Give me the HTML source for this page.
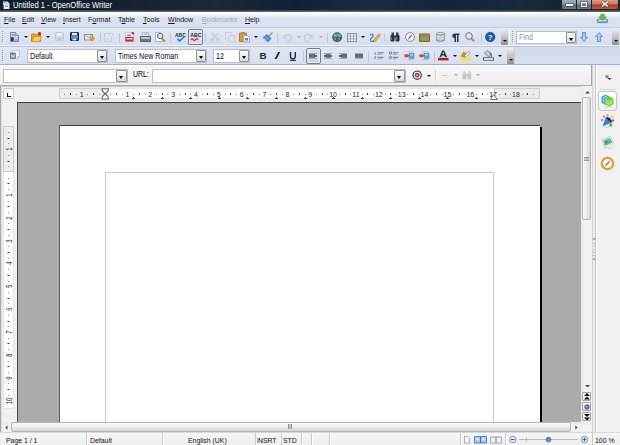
<!DOCTYPE html>
<html><head><meta charset="utf-8">
<style>
*{margin:0;padding:0;box-sizing:border-box}
html,body{width:620px;height:445px;overflow:hidden;background:#f0f0f0;font-family:"Liberation Sans",sans-serif;position:relative}
.a{position:absolute}
svg.a{overflow:visible}
.t{position:absolute;white-space:nowrap;font-size:7.2px;line-height:1;color:#000}
.grip{position:absolute;width:3px}
.sep{position:absolute;width:1px;background:#bfc7d7}
.combo{position:absolute;background:#fff;border:1px solid #b9bec8}
.dd{position:absolute;right:0;top:0;bottom:0;width:10px;background:linear-gradient(#fdfdfd,#e6e6e6 60%,#dadada);border:1px solid #8e9096;border-radius:1px}
.dd:after{content:"";position:absolute;left:1.5px;top:4.5px;border-left:2.5px solid transparent;border-right:2.5px solid transparent;border-top:3px solid #000}
.arr{position:absolute;width:0;height:0;border-left:2px solid transparent;border-right:2px solid transparent;border-top:2px solid #111}
.arrd{border-top-color:#a8b0bc}
.tend{position:absolute;width:7px;background:linear-gradient(#ececec,#c4c4c4 50%,#8e8e8e);border-radius:1px}
.tend:after{content:"";position:absolute;left:1.5px;bottom:3px;border-left:2px solid transparent;border-right:2px solid transparent;border-top:2px solid #111}
.rn{font-size:7px;color:#1a1a2a}
.vn{font-size:8.2px;color:#1a1a2a;display:flex;align-items:center;justify-content:center;transform:rotate(-90deg) scaleX(0.72)}
.ssep{position:absolute;top:1px;width:1px;height:12px;background:#c9c9c9;box-shadow:1px 0 0 #fff}
.st{position:absolute;white-space:nowrap;font-size:6.9px;line-height:1;color:#111;top:5px}
</style></head><body>
<div class="a" style="left:0px;top:0px;width:620px;height:11px;background:linear-gradient(90deg,#141e2a 0%,#162230 20%,#1a2838 35%,#122036 48%,#1c2c3e 60%,#14243a 72%,#1a2a3c 84%,#101c2a 100%)"></div>
<div class="a" style="left:0px;top:9.5px;width:620px;height:2px;background:linear-gradient(#2a3644,#6a747e)"></div>
<svg class="a" style="left:2px;top:1px" width="8" height="8" viewBox="0 0 8 8"><path d="M1 0.5 h4.5 l2 2 v5.5 h-6.5z" fill="#dfe6ee"/><rect x="1.5" y="1.2" width="3.5" height="1" fill="#9aa8b8"/><rect x="1.5" y="2.8" width="5" height="0.8" fill="#b8c4d0"/><rect x="2" y="4.2" width="5" height="3.3" fill="#f4f8fc"/><rect x="3" y="4.8" width="3" height="1" fill="#4a7ab0"/><rect x="0.5" y="4" width="1.2" height="3.8" fill="#1a2a3a"/></svg>
<div class="t" style="left:12.6px;top:1.7px;font-size:8.2px;color:#fff;transform:scaleX(0.925);transform-origin:0 0">Untitled 1 - OpenOffice Writer</div>
<div class="a" style="left:561px;top:0px;width:58px;height:9.5px;background:#1c242e;border-radius:0 0 3px 3px;box-shadow:0 0 1px #6a7480"></div>
<div class="a" style="left:562px;top:0px;width:14px;height:8.5px;background:linear-gradient(#a2acb8 0,#8a96a2 45%,#5e6a78 55%,#6e7a88 100%);border-radius:0 0 0 2px"></div>
<div class="a" style="left:577px;top:0px;width:14px;height:8.5px;background:linear-gradient(#a2acb8 0,#8a96a2 45%,#5e6a78 55%,#6e7a88 100%)"></div>
<div class="a" style="left:592px;top:0px;width:26px;height:8.5px;background:linear-gradient(#dc9a8e 0,#cc7464 45%,#a83a24 55%,#c05a3a 100%);border-radius:0 0 2px 0"></div>
<div class="a" style="left:566px;top:3.5px;width:7px;height:2px;background:#fff;box-shadow:0 0 0 0.6px #40464e"></div>
<div class="a" style="left:581px;top:2px;width:6px;height:5px;border:1px solid #fff;border-top-width:1.6px;box-shadow:0 0 0 0.6px #40464e"></div>
<svg class="a" style="left:601px;top:1px" width="8" height="6" viewBox="0 0 8 6"><path d="M1.2 0.6 L6.8 5.4 M6.8 0.6 L1.2 5.4" stroke="#5a1a10" stroke-width="2.6"/><path d="M1.2 0.6 L6.8 5.4 M6.8 0.6 L1.2 5.4" stroke="#fff" stroke-width="1.6"/></svg>
<div class="a" style="left:0px;top:11.5px;width:620px;height:15.5px;background:linear-gradient(#ffffff 0,#fafbfd 1.5px,#e8ecf6 4px,#dbe1f1 6px,#d9dff0 100%)"></div>
<div class="a" style="left:0px;top:27px;width:620px;height:1px;background:#c6cddd"></div>
<div class="t" style="left:4px;top:16.1px;font-size:7.6px;color:#151515;transform:scaleX(0.93);transform-origin:0 0"><u style="text-decoration-thickness:1px;text-underline-offset:1px">F</u>ile</div>
<div class="t" style="left:22px;top:16.1px;font-size:7.6px;color:#151515;transform:scaleX(0.93);transform-origin:0 0"><u style="text-decoration-thickness:1px;text-underline-offset:1px">E</u>dit</div>
<div class="t" style="left:41px;top:16.1px;font-size:7.6px;color:#151515;transform:scaleX(0.93);transform-origin:0 0"><u style="text-decoration-thickness:1px;text-underline-offset:1px">V</u>iew</div>
<div class="t" style="left:63px;top:16.1px;font-size:7.6px;color:#151515;transform:scaleX(0.93);transform-origin:0 0"><u style="text-decoration-thickness:1px;text-underline-offset:1px">I</u>nsert</div>
<div class="t" style="left:88px;top:16.1px;font-size:7.6px;color:#151515;transform:scaleX(0.93);transform-origin:0 0">F<u style="text-decoration-thickness:1px;text-underline-offset:1px">o</u>rmat</div>
<div class="t" style="left:118px;top:16.1px;font-size:7.6px;color:#151515;transform:scaleX(0.93);transform-origin:0 0">T<u style="text-decoration-thickness:1px;text-underline-offset:1px">a</u>ble</div>
<div class="t" style="left:143px;top:16.1px;font-size:7.6px;color:#151515;transform:scaleX(0.93);transform-origin:0 0"><u style="text-decoration-thickness:1px;text-underline-offset:1px">T</u>ools</div>
<div class="t" style="left:168px;top:16.1px;font-size:7.6px;color:#151515;transform:scaleX(0.93);transform-origin:0 0"><u style="text-decoration-thickness:1px;text-underline-offset:1px">W</u>indow</div>
<div class="t" style="left:202px;top:16.1px;font-size:7.6px;color:#a4a9b2;transform:scaleX(0.93);transform-origin:0 0"><u style="text-decoration-thickness:1px;text-underline-offset:1px">B</u>ookmarks</div>
<div class="t" style="left:245px;top:16.1px;font-size:7.6px;color:#151515;transform:scaleX(0.93);transform-origin:0 0"><u style="text-decoration-thickness:1px;text-underline-offset:1px">H</u>elp</div>
<svg class="a" style="left:597px;top:14px" width="11" height="9" viewBox="0 0 11 9"><rect x="0.4" y="5.2" width="10.2" height="3.4" rx="0.8" fill="#8ab4e0" stroke="#3a6aa0" stroke-width="0.7"/><rect x="1.5" y="5.8" width="8" height="1" fill="#dceaf8"/><path d="M3.8 0.3 h3.4 v2.6 h2 l-3.7 3.6 l-3.7 -3.6 h2z" fill="#6cc43a" stroke="#3a8a1a" stroke-width="0.6"/></svg>
<div class="a" style="left:0px;top:28px;width:620px;height:37px;background:#d5dcee"></div>
<div class="a" style="left:0px;top:28px;width:509px;height:18px;background:linear-gradient(#e2e7f4,#d6ddee);border-bottom:1px solid #eef1f8"></div>
<div class="a" style="left:510px;top:28px;width:110px;height:18px;background:linear-gradient(#e2e7f4,#d6ddee);border-bottom:1px solid #eef1f8"></div>
<div class="a" style="left:509px;top:28px;width:1px;height:18px;background:#f3f6fb"></div>
<div class="a" style="left:0px;top:47px;width:514px;height:18px;background:linear-gradient(#e0e6f3,#d6ddee)"></div>
<div class="a" style="left:0px;top:46px;width:620px;height:1px;background:#bfc6d6"></div>
<div class="a" style="left:514px;top:47px;width:1px;height:18px;background:#c5cde0"></div>
<div class="a" style="left:515px;top:47px;width:105px;height:18px;background:linear-gradient(#d2d9eb,#d8dff0)"></div>
<div class="a" style="left:0px;top:64px;width:620px;height:1px;background:#a9afba"></div>
<svg class="a" style="left:2px;top:31px" width="3" height="12" viewBox="0 0 3 12"><rect x="0" y="0" width="1" height="1" fill="#8e98aa"/><rect x="1" y="1" width="1" height="1" fill="#ffffff"/><rect x="0" y="2" width="1" height="1" fill="#8e98aa"/><rect x="1" y="3" width="1" height="1" fill="#ffffff"/><rect x="0" y="4" width="1" height="1" fill="#8e98aa"/><rect x="1" y="5" width="1" height="1" fill="#ffffff"/><rect x="0" y="6" width="1" height="1" fill="#8e98aa"/><rect x="1" y="7" width="1" height="1" fill="#ffffff"/><rect x="0" y="8" width="1" height="1" fill="#8e98aa"/><rect x="1" y="9" width="1" height="1" fill="#ffffff"/><rect x="0" y="10" width="1" height="1" fill="#8e98aa"/><rect x="1" y="11" width="1" height="1" fill="#ffffff"/></svg>
<svg class="a" style="left:2px;top:50px" width="3" height="12" viewBox="0 0 3 12"><rect x="0" y="0" width="1" height="1" fill="#8e98aa"/><rect x="1" y="1" width="1" height="1" fill="#ffffff"/><rect x="0" y="2" width="1" height="1" fill="#8e98aa"/><rect x="1" y="3" width="1" height="1" fill="#ffffff"/><rect x="0" y="4" width="1" height="1" fill="#8e98aa"/><rect x="1" y="5" width="1" height="1" fill="#ffffff"/><rect x="0" y="6" width="1" height="1" fill="#8e98aa"/><rect x="1" y="7" width="1" height="1" fill="#ffffff"/><rect x="0" y="8" width="1" height="1" fill="#8e98aa"/><rect x="1" y="9" width="1" height="1" fill="#ffffff"/><rect x="0" y="10" width="1" height="1" fill="#8e98aa"/><rect x="1" y="11" width="1" height="1" fill="#ffffff"/></svg>
<svg class="a" style="left:512px;top:31px" width="3" height="12" viewBox="0 0 3 12"><rect x="0" y="0" width="1" height="1" fill="#8e98aa"/><rect x="1" y="1" width="1" height="1" fill="#ffffff"/><rect x="0" y="2" width="1" height="1" fill="#8e98aa"/><rect x="1" y="3" width="1" height="1" fill="#ffffff"/><rect x="0" y="4" width="1" height="1" fill="#8e98aa"/><rect x="1" y="5" width="1" height="1" fill="#ffffff"/><rect x="0" y="6" width="1" height="1" fill="#8e98aa"/><rect x="1" y="7" width="1" height="1" fill="#ffffff"/><rect x="0" y="8" width="1" height="1" fill="#8e98aa"/><rect x="1" y="9" width="1" height="1" fill="#ffffff"/><rect x="0" y="10" width="1" height="1" fill="#8e98aa"/><rect x="1" y="11" width="1" height="1" fill="#ffffff"/></svg>
<div class="tend" style="left:501px;top:29px;height:16px"></div>
<div class="tend" style="left:612px;top:29px;height:16px"></div>
<div class="tend" style="left:507px;top:48px;height:16px"></div>
<svg class="a" style="left:10px;top:32px" width="9" height="10" viewBox="0 0 9 10"><path d="M0.5 0.5 h5 l3 3 v6 h-8z" fill="#eef2f8" stroke="#6a7a8e" stroke-width="0.9"/><path d="M5.5 0.5 v3 h3" fill="#c8d4e0" stroke="#6a7a8e" stroke-width="0.7"/><rect x="1.5" y="1.8" width="3" height="0.9" fill="#5a6a80"/><rect x="1.5" y="3.4" width="4.5" height="0.9" fill="#7a8a9e"/><rect x="1" y="5.2" width="2.8" height="3.8" fill="#2a3e5a"/><rect x="4.3" y="5.2" width="3.7" height="3.8" fill="#8ab4e0"/><rect x="5" y="6" width="2.3" height="1" fill="#e8f0f8"/></svg>
<div class="arr" style="left:24px;top:36px"></div>
<svg class="a" style="left:31px;top:32px" width="11" height="10" viewBox="0 0 11 10"><path d="M0.5 2 h4 l1 1 h4 v6.5 h-9z" fill="#e9a818" stroke="#b87a10" stroke-width="0.8"/><path d="M1 9.5 l2 -5 h7.5 l-2 5z" fill="#f8d050" stroke="#c89020" stroke-width="0.6"/><circle cx="8.5" cy="1.8" r="1.8" fill="#d82020"/></svg>
<div class="arr" style="left:46px;top:36px"></div>
<svg class="a" style="left:55px;top:32px" width="9" height="9" viewBox="0 0 9 9"><rect x="0.5" y="0.5" width="8" height="8" rx="1" fill="#d4d9e2" stroke="#c2c8d2"/><rect x="2" y="1" width="5" height="3" fill="#eef1f6"/><rect x="2.5" y="6" width="4" height="2.5" fill="#c4cad4"/></svg>
<svg class="a" style="left:70px;top:32px" width="9" height="9" viewBox="0 0 9 9"><rect x="0.5" y="0.5" width="8" height="8" rx="0.5" fill="#1f4f9a" stroke="#0e2446"/><rect x="2" y="0.8" width="5" height="2.5" fill="#e8eef8"/><rect x="1" y="4" width="7" height="2" fill="#4a9ae8"/><rect x="2.5" y="6.5" width="4" height="2" fill="#dfe6f0"/></svg>
<svg class="a" style="left:84px;top:34px" width="11" height="7" viewBox="0 0 11 7"><rect x="0.5" y="0.5" width="8" height="5.5" fill="#e8eaee" stroke="#8a929e"/><path d="M0.5 0.5 l4 3 l4 -3" stroke="#8a929e" fill="none" stroke-width="0.8"/><path d="M6 3.5 h2 v-1.5 l3 2.5 l-3 2.5 v-1.5 h-2z" fill="#f0a020" stroke="#c07010" stroke-width="0.5"/></svg>
<div class="sep" style="left:100px;top:33px;height:9px"></div>
<svg class="a" style="left:104px;top:32px" width="10" height="10" viewBox="0 0 10 10"><rect x="0.5" y="1.5" width="7" height="8" fill="#dfe3ea" stroke="#c8ced8"/><path d="M3 6 l5 -5 l1.5 1.5 l-5 5 h-1.5z" fill="#e6eaf0" stroke="#c4cad4" stroke-width="0.8"/></svg>
<div class="sep" style="left:119px;top:33px;height:9px"></div>
<svg class="a" style="left:125px;top:32px" width="9" height="10" viewBox="0 0 9 10"><path d="M0.5 0.5 h6 l2 2 v7 h-8z" fill="#f4f6fa" stroke="#b0b8c4" stroke-width="0.8"/><rect x="2" y="2.5" width="4" height="2" fill="#6a9ad8"/><rect x="0.5" y="5" width="8" height="4.5" fill="#d42a1e"/><rect x="1.5" y="6" width="6" height="1.5" fill="#fbd0c8"/><circle cx="7.8" cy="1.3" r="1.3" fill="#d42020"/></svg>
<svg class="a" style="left:140px;top:32px" width="11" height="10" viewBox="0 0 11 10"><rect x="2.5" y="0.5" width="6" height="4" fill="#f8fafc" stroke="#9aa6b4" stroke-width="0.7"/><rect x="3.5" y="1.5" width="4" height="1.3" fill="#7ab0e0"/><path d="M0.5 4.5 h10 v5 h-10z" fill="#70767e" stroke="#3a3e44" stroke-width="0.7"/><rect x="1" y="5" width="9" height="1.8" fill="#c8ccd2"/><rect x="7.8" y="7.3" width="2" height="1.3" fill="#48c048"/></svg>
<svg class="a" style="left:155px;top:32px" width="11" height="10" viewBox="0 0 11 10"><path d="M0.5 0.5 h5 l2 2 v7 h-7z" fill="#f8f9fb" stroke="#9aa4b0" stroke-width="0.8"/><line x1="6.5" y1="6" x2="10" y2="9.5" stroke="#d88a20" stroke-width="1.8"/><circle cx="5.2" cy="4" r="2.7" fill="#cfe4f6" stroke="#5a6878" stroke-width="1"/></svg>
<div class="sep" style="left:170px;top:33px;height:9px"></div>
<svg class="a" style="left:175px;top:32px" width="11" height="10" viewBox="0 0 11 10"><text x="0" y="4.6" font-family="Liberation Sans" font-weight="bold" font-size="5" fill="#1a2a48">ABC</text><path d="M2.5 6.5 l2 2.5 l5 -4.5" stroke="#2a78d8" stroke-width="1.6" fill="none"/></svg>
<div class="a" style="left:188px;top:29px;width:15px;height:16px;border:1px solid #747d8b;border-radius:2px;background:linear-gradient(#dde2ec,#cfd6e3);box-shadow:inset 0 0 0 1px #e8ecf3"></div>
<svg class="a" style="left:190px;top:32px" width="11" height="9" viewBox="0 0 11 9"><text x="0.3" y="5" font-family="Liberation Sans" font-weight="bold" font-size="5.2" fill="#1a2a48">ABC</text><path d="M0.8 7.6 q1.2 -1.6 2.4 0 t2.4 0 t2.4 0" stroke="#e02a18" stroke-width="1.3" fill="none"/></svg>
<div class="sep" style="left:205px;top:33px;height:9px"></div>
<svg class="a" style="left:210px;top:32px" width="11" height="10" viewBox="0 0 11 10"><path d="M1.5 0.5 L8.5 8 M8.5 0.5 L1.5 8" stroke="#c6ccd6" stroke-width="1.3"/><circle cx="2" cy="8.3" r="1.4" fill="none" stroke="#c6ccd6"/><circle cx="8" cy="8.3" r="1.4" fill="none" stroke="#c6ccd6"/></svg>
<svg class="a" style="left:225px;top:32px" width="10" height="10" viewBox="0 0 10 10"><rect x="0.5" y="0.5" width="5.5" height="6.5" fill="#e2e6ec" stroke="#c8ced8"/><rect x="4" y="3.5" width="5.5" height="6" fill="#e2e6ec" stroke="#c8ced8"/></svg>
<svg class="a" style="left:239px;top:32px" width="11" height="10" viewBox="0 0 11 10"><rect x="0.5" y="1" width="7" height="8.5" rx="0.5" fill="#e49a20" stroke="#a86a10" stroke-width="0.8"/><rect x="2.5" y="0" width="3" height="2" fill="#8a8e96"/><path d="M4.5 3.5 h4 l2 2 v4.5 h-6z" fill="#f2f6fa" stroke="#8a96a6" stroke-width="0.8"/><rect x="6" y="6" width="3" height="2.5" fill="#4a8ad8"/></svg>
<div class="arr" style="left:254px;top:36px"></div>
<svg class="a" style="left:262px;top:32px" width="12" height="10" viewBox="0 0 12 10"><line x1="7" y1="4" x2="10.5" y2="0.5" stroke="#d89020" stroke-width="1.6"/><path d="M1 5.5 l4 -3 l4 4 l-3 3.5 z" fill="#3a8ae0" stroke="#2a68b8" stroke-width="0.6"/><path d="M2 5.5 l3 3 M3.5 4.2 l3 3" stroke="#a8d0f8" stroke-width="0.7"/></svg>
<div class="sep" style="left:277px;top:33px;height:9px"></div>
<svg class="a" style="left:282px;top:33px" width="10" height="9" viewBox="0 0 10 9"><path d="M2 1.5 v3.5 h3.5" stroke="#c6ccd6" stroke-width="1.2" fill="none"/><path d="M2.5 4.5 a3.6 3.6 0 1 1 2.5 4" stroke="#c6ccd6" stroke-width="1.4" fill="none"/></svg>
<div class="arr arrd" style="left:297px;top:36px"></div>
<svg class="a" style="left:304px;top:33px" width="10" height="9" viewBox="0 0 10 9"><path d="M8 1.5 v3.5 h-3.5" stroke="#c6ccd6" stroke-width="1.2" fill="none"/><path d="M7.5 4.5 a3.6 3.6 0 1 0 -2.5 4" stroke="#c6ccd6" stroke-width="1.4" fill="none"/></svg>
<div class="arr arrd" style="left:319px;top:36px"></div>
<div class="sep" style="left:327px;top:33px;height:9px"></div>
<svg class="a" style="left:332px;top:32px" width="11" height="11" viewBox="0 0 11 11"><circle cx="5.2" cy="5.2" r="4.8" fill="#3a78c0"/><rect x="1.6" y="1.8" width="3.2" height="3" fill="#78c838"/><rect x="5.6" y="1.8" width="3.2" height="3" fill="#78c838"/><rect x="1.6" y="5.4" width="3.2" height="3.4" fill="#3a3e44"/><rect x="5.6" y="5.4" width="3.2" height="3.4" fill="#3a3e44"/><path d="M2.2 6.3 h2 M2.2 7.8 h2 M6.2 6.3 h2 M6.2 7.8 h2" stroke="#e8ecf0" stroke-width="0.6"/><circle cx="5.2" cy="5.2" r="4.6" fill="none" stroke="#2a5a98" stroke-width="0.7"/></svg>
<svg class="a" style="left:347px;top:33px" width="10" height="9" viewBox="0 0 10 9"><rect x="0.5" y="0.5" width="9" height="8" fill="#f0f2f5" stroke="#8e949c"/><path d="M3.5 0.5 v8 M6.5 0.5 v8 M0.5 3.2 h9 M0.5 5.9 h9" stroke="#9aa0a8" stroke-width="0.9"/></svg>
<div class="arr" style="left:361px;top:36px"></div>
<svg class="a" style="left:369px;top:32px" width="11" height="10" viewBox="0 0 11 10"><path d="M1 3.5 q1.5 -2.5 3 -0.8 q1 1.3 -1.5 3.3 q-2 1.8 -0.5 3.2 q1 0.8 2.5 -0.5" stroke="#2a80e0" stroke-width="1.1" fill="none"/><path d="M4.2 8.6 l5 -6 l1.6 1.4 l-5 6z" fill="#f4c020" stroke="#9a7010" stroke-width="0.6"/><path d="M9.2 2.6 l1 -1.2 l1.6 1.4 l-1 1.2z" fill="#f07890"/><path d="M4.2 8.6 l-0.4 1.2 l1.2 -0.5z" fill="#333"/></svg>
<div class="sep" style="left:384px;top:33px;height:9px"></div>
<svg class="a" style="left:390px;top:32px" width="10" height="10" viewBox="0 0 10 10"><rect x="0.5" y="3" width="4" height="6.5" rx="1" fill="#2a2c30"/><rect x="5.5" y="3" width="4" height="6.5" rx="1" fill="#2a2c30"/><rect x="1.5" y="0.5" width="2.5" height="3" fill="#3a3c42"/><rect x="6" y="0.5" width="2.5" height="3" fill="#3a3c42"/><rect x="4" y="3.5" width="2" height="2.5" fill="#4a4c52"/><rect x="1.2" y="5" width="1" height="3" fill="#7a7e86"/><rect x="6.2" y="5" width="1" height="3" fill="#7a7e86"/></svg>
<svg class="a" style="left:405px;top:32px" width="10" height="10" viewBox="0 0 10 10"><circle cx="5" cy="5" r="4.4" fill="#fafafa" stroke="#7a8088" stroke-width="0.9"/><path d="M7.5 2 L5.6 5.6 L4.4 4.4z" fill="#2a6ad8"/><path d="M2.5 8 L4.4 4.4 L5.6 5.6z" fill="#e02020"/></svg>
<svg class="a" style="left:419px;top:33px" width="11" height="9" viewBox="0 0 11 9"><rect x="0.5" y="1" width="10" height="7.5" fill="#c87a28" stroke="#8a5010" stroke-width="0.8"/><rect x="2" y="2.5" width="7" height="2" fill="#3a9ae0"/><rect x="2" y="4.5" width="7" height="2.5" fill="#5ac040"/><path d="M4 1 l1.5 -1 l1.5 1" stroke="#9aa0a8" stroke-width="0.6" fill="none"/></svg>
<svg class="a" style="left:436px;top:32px" width="9" height="10" viewBox="0 0 9 10"><path d="M0.5 1.5 v7 q4 2 8 0 v-7" fill="#b8bcc4" stroke="#7a7e86" stroke-width="0.8"/><ellipse cx="4.5" cy="1.6" rx="4" ry="1.2" fill="#e4e6ea" stroke="#7a7e86" stroke-width="0.7"/><path d="M0.5 4 q4 2 8 0 M0.5 6.2 q4 2 8 0" stroke="#f0f2f4" stroke-width="0.8" fill="none"/></svg>
<svg class="a" style="left:451px;top:33px" width="9" height="9" viewBox="0 0 9 9"><path d="M3.5 0.5 h5 v1.5 h-1 v7 h-1.5 v-7 h-1 v7 h-1.5 v-4 a2.2 2.2 0 0 1 0 -4.5z" fill="#1c3a64"/></svg>
<svg class="a" style="left:465px;top:32px" width="10" height="10" viewBox="0 0 10 10"><line x1="6" y1="6" x2="9.2" y2="9.2" stroke="#d88a20" stroke-width="2"/><circle cx="4" cy="4" r="3.3" fill="#d8ecfa" stroke="#6a7480" stroke-width="1"/></svg>
<div class="sep" style="left:481px;top:33px;height:9px"></div>
<svg class="a" style="left:485px;top:32px" width="11" height="11" viewBox="0 0 11 11"><circle cx="5.2" cy="5" r="4.8" fill="#1a5ab0" stroke="#0e3e80" stroke-width="0.5"/><text x="5.2" y="7.9" text-anchor="middle" font-family="Liberation Sans" font-weight="bold" font-size="7.5" fill="#fff">?</text></svg>
<div class="combo" style="left:516px;top:31px;width:61px;height:13px"><div class="dd"></div></div>
<div class="t" style="left:519px;top:34.4px;font-size:8.2px;color:#8a929e;transform:scaleX(0.87);transform-origin:0 0">Find</div>
<svg class="a" style="left:580px;top:32px" width="8" height="10" viewBox="0 0 8 10"><path d="M2.5 0.5 h3 v5 h2 l-3.5 4 l-3.5 -4 h2z" fill="#a8cdf0" stroke="#4a88c8" stroke-width="0.8"/></svg>
<svg class="a" style="left:595px;top:32px" width="8" height="10" viewBox="0 0 8 10"><path d="M2.5 9.5 h3 v-5 h2 l-3.5 -4 l-3.5 4 h2z" fill="#a8cdf0" stroke="#4a88c8" stroke-width="0.8"/></svg>
<svg class="a" style="left:10px;top:50px" width="10" height="10" viewBox="0 0 10 10"><path d="M2.5 0.5 h7 v6 l-2 2 h-5z" fill="#eef0f4" stroke="#b4bac4" stroke-width="0.7"/><rect x="0.5" y="3" width="5" height="5.5" fill="#7a8088" stroke="#5a6068" stroke-width="0.6"/><path d="M1.2 4 l0.8 3.5 l0.9 -2.3 l0.9 2.3 l0.8 -3.5" stroke="#f4f4f4" stroke-width="0.7" fill="none"/><path d="M7.5 8.5 v-2 h2" fill="#d0d4da" stroke="#b4bac4" stroke-width="0.6"/></svg>
<div class="combo" style="left:27px;top:49px;width:81px;height:14px"><div class="dd"></div></div>
<div class="t" style="left:30px;top:53.4px;font-size:8.2px;color:#0a0a14;transform:scaleX(0.87);transform-origin:0 0">Default</div>
<div class="combo" style="left:115px;top:49px;width:92px;height:14px"><div class="dd"></div></div>
<div class="t" style="left:118px;top:53.4px;font-size:8.2px;color:#0a0a14;transform:scaleX(0.87);transform-origin:0 0">Times New Roman</div>
<div class="combo" style="left:213px;top:49px;width:37px;height:14px"><div class="dd"></div></div>
<div class="t" style="left:216px;top:53.4px;font-size:8.2px;color:#0a0a14;transform:scaleX(0.87);transform-origin:0 0">12</div>
<svg class="a" style="left:259px;top:51px" width="40" height="11" viewBox="0 0 40 11"><text x="0.6" y="8" font-family="Liberation Sans" font-weight="bold" font-size="9.8" fill="#1a2a40">B</text><path d="M19.2 1 h2 l-3.6 7 h-2z" fill="#1a2a40"/><path d="M31.5 1 v4.6 q0 2.4 2.4 2.4 q2.4 0 2.4 -2.4 v-4.6" stroke="#1a2a40" stroke-width="1.4" fill="none"/><rect x="30.8" y="9" width="6.2" height="0.9" fill="#1a2a40"/></svg>
<div class="sep" style="left:303px;top:51px;height:11px"></div>
<div class="a" style="left:306px;top:48px;width:15px;height:16px;border:1px solid #747d8b;border-radius:2px;background:linear-gradient(#dde2ec,#cfd6e3);box-shadow:inset 0 0 0 1px #e8ecf3"></div>
<svg class="a" style="left:309px;top:53px" width="8" height="6" viewBox="0 0 8 6"><rect x="0" y="0" width="8" height="1" fill="#9aa2ac"/><rect x="0" y="1" width="6" height="1" fill="#6a7480"/><rect x="0" y="2" width="8" height="1" fill="#5a6472"/><rect x="0" y="3" width="8" height="1" fill="#606a78"/><rect x="0" y="4" width="6" height="1" fill="#76808c"/><rect x="0" y="5" width="8" height="1" fill="#a4acb6"/></svg>
<svg class="a" style="left:324px;top:53px" width="8" height="6" viewBox="0 0 8 6"><rect x="0" y="0" width="8" height="1" fill="#9aa2ac"/><rect x="1.5" y="1" width="5" height="1" fill="#6a7480"/><rect x="0" y="2" width="8" height="1" fill="#5a6472"/><rect x="0" y="3" width="8" height="1" fill="#606a78"/><rect x="1.5" y="4" width="5" height="1" fill="#76808c"/><rect x="0" y="5" width="8" height="1" fill="#a4acb6"/></svg>
<svg class="a" style="left:339px;top:53px" width="8" height="6" viewBox="0 0 8 6"><rect x="0" y="0" width="8" height="1" fill="#9aa2ac"/><rect x="2" y="1" width="6" height="1" fill="#6a7480"/><rect x="0" y="2" width="8" height="1" fill="#5a6472"/><rect x="0" y="3" width="8" height="1" fill="#606a78"/><rect x="2" y="4" width="6" height="1" fill="#76808c"/><rect x="0" y="5" width="8" height="1" fill="#a4acb6"/></svg>
<svg class="a" style="left:355px;top:53px" width="8" height="6" viewBox="0 0 8 6"><rect x="0" y="0" width="8" height="1" fill="#9aa2ac"/><rect x="0" y="1" width="8" height="1" fill="#6a7480"/><rect x="0" y="2" width="8" height="1" fill="#5a6472"/><rect x="0" y="3" width="8" height="1" fill="#606a78"/><rect x="0" y="4" width="8" height="1" fill="#76808c"/><rect x="0" y="5" width="8" height="1" fill="#a4acb6"/></svg>
<div class="sep" style="left:368px;top:51px;height:11px"></div>
<svg class="a" style="left:374px;top:51px" width="10" height="9" viewBox="0 0 10 9"><text x="0" y="3.6" font-family="Liberation Sans" font-weight="bold" font-size="3.8" fill="#3a78d0">1</text><text x="0" y="8.2" font-family="Liberation Sans" font-weight="bold" font-size="3.8" fill="#3a78d0">2</text><rect x="3.5" y="1.2" width="6" height="1.2" fill="#7a828e"/><rect x="3.5" y="3" width="4.5" height="0.9" fill="#a4aab4"/><rect x="3.5" y="5.8" width="6" height="1.2" fill="#7a828e"/><rect x="3.5" y="7.6" width="4.5" height="0.9" fill="#a4aab4"/></svg>
<svg class="a" style="left:389px;top:51px" width="10" height="9" viewBox="0 0 10 9"><circle cx="1.5" cy="2" r="1.2" fill="#e8f0f8" stroke="#3a5a88" stroke-width="0.8"/><circle cx="1.5" cy="6.6" r="1.2" fill="#e8f0f8" stroke="#3a5a88" stroke-width="0.8"/><rect x="3.8" y="1.2" width="5.5" height="1.2" fill="#7a828e"/><rect x="3.8" y="3" width="4" height="0.9" fill="#a4aab4"/><rect x="3.8" y="5.8" width="5.5" height="1.2" fill="#7a828e"/><rect x="3.8" y="7.6" width="4" height="0.9" fill="#a4aab4"/></svg>
<svg class="a" style="left:404px;top:51px" width="11" height="10" viewBox="0 0 11 10"><path d="M3.5 0.8 h6 M3.5 8.8 h6" stroke="#a8aeb8" stroke-width="0.8"/><rect x="5" y="2.3" width="5" height="5" fill="#5aa8ec" stroke="#3a7ac0" stroke-width="0.5"/><rect x="6" y="3.3" width="3" height="1" fill="#d8ecfc"/><path d="M3 3 l2.5 1.8 l-2.5 1.8z" fill="#d83020"/><circle cx="2" cy="4.8" r="1.8" fill="#e84a28"/></svg>
<svg class="a" style="left:419px;top:51px" width="11" height="10" viewBox="0 0 11 10"><path d="M3.5 0.8 h6 M3.5 8.8 h6" stroke="#a8aeb8" stroke-width="0.8"/><rect x="5" y="2.3" width="5" height="5" fill="#5aa8ec" stroke="#3a7ac0" stroke-width="0.5"/><rect x="6" y="3.3" width="3" height="1" fill="#d8ecfc"/><path d="M3 3 l2.5 1.8 l-2.5 1.8z" fill="#d83020"/><circle cx="2" cy="4.8" r="1.8" fill="#e84a28"/></svg>
<div class="sep" style="left:434px;top:51px;height:11px"></div>
<svg class="a" style="left:438px;top:50px" width="11" height="11" viewBox="0 0 11 11"><path d="M1.5 7 L4.2 0.5 h2 L9 7 h-2 l-0.6 -1.6 h-2.6 l-0.6 1.6z M4.3 4 h1.8 l-0.9 -2.4z" fill="#1c3050"/><rect x="0" y="7.8" width="10.5" height="2.6" fill="#b81c14"/></svg>
<div class="arr" style="left:453px;top:55px"></div>
<svg class="a" style="left:460px;top:50px" width="11" height="11" viewBox="0 0 11 11"><path d="M0.5 6.5 l3 -5 l3 1.5 l-1 5z" fill="#c8902a"/><path d="M4.5 6 l4.5 -5 l1.5 1.3 l-4.5 5z" fill="#f0f2f6" stroke="#7a8290" stroke-width="0.6"/><rect x="0.3" y="7.8" width="10.4" height="2.6" fill="#f6ec10"/></svg>
<div class="arr" style="left:475px;top:55px"></div>
<svg class="a" style="left:483px;top:50px" width="11" height="11" viewBox="0 0 11 11"><path d="M1.5 3 l3 -2.5 l4 3 l-3 3.5z" fill="#c8ccd4" stroke="#5a6270" stroke-width="0.7"/><path d="M6.5 3 q3 2 1.5 4" stroke="#3a7ad0" stroke-width="1.4" fill="none"/><rect x="0.5" y="7.8" width="10" height="2.4" fill="#fff" stroke="#3a3e46" stroke-width="0.8"/></svg>
<div class="arr" style="left:498px;top:55px"></div>
<div class="a" style="left:0px;top:65px;width:592px;height:21px;background:linear-gradient(#f6f6f6,#eeeeee);border-top:1px solid #fdfdfd;border-bottom:1px solid #acacac"></div>
<div class="a" style="left:591px;top:65px;width:1px;height:22px;background:#a8a8a8"></div>
<div class="combo" style="left:3px;top:69px;width:125px;height:14px;border-color:#b8bcc4"><div class="dd" style="width:11px"></div></div>
<div class="t" style="left:133px;top:71.2px;font-size:8.2px;color:#0a0a18;transform:scaleX(0.85);transform-origin:0 0">URL:</div>
<div class="combo" style="left:152px;top:69px;width:254px;height:14px;border-color:#b8bcc4"><div class="dd" style="width:11px"></div></div>
<svg class="a" style="left:412px;top:70px" width="11" height="11" viewBox="0 0 11 11"><circle cx="5.2" cy="5.2" r="4.8" fill="#2a5ab0"/><circle cx="5.2" cy="5.2" r="3.4" fill="#f4f4f4"/><circle cx="5.2" cy="5.2" r="2.4" fill="#e02818"/><circle cx="5.2" cy="5.2" r="1" fill="#f8d020"/></svg>
<div class="arr" style="left:427px;top:75px"></div>
<div class="a" style="left:435px;top:69px;width:1px;height:12px;background:#d0d0d0;box-shadow:1px 0 0 #fff"></div>
<div class="a" style="left:442px;top:75px;width:5px;height:1px;background:#c8c8c8"></div>
<div class="arr arrd" style="left:454px;top:74px"></div>
<svg class="a" style="left:462px;top:71px" width="10" height="9" viewBox="0 0 10 9"><rect x="0.5" y="2.5" width="3.8" height="6" rx="1" fill="#c4c8ce"/><rect x="5.5" y="2.5" width="3.8" height="6" rx="1" fill="#c4c8ce"/><rect x="1.2" y="0.3" width="2.4" height="3" fill="#ccd0d6"/><rect x="6.2" y="0.3" width="2.4" height="3" fill="#ccd0d6"/><rect x="4" y="3" width="2" height="2" fill="#ccd0d6"/></svg>
<div class="arr arrd" style="left:476px;top:74px"></div>
<div class="a" style="left:592px;top:65px;width:4px;height:368px;background:#ececec;border-left:1px solid #d4d4d4"></div>
<div class="a" style="left:595px;top:65px;width:1px;height:368px;background:#c8c8c8"></div>
<div class="a" style="left:596px;top:65px;width:24px;height:368px;background:#f0f0f0;border-left:1px solid #fafafa"></div>
<svg class="a" style="left:605px;top:75px" width="7" height="6" viewBox="0 0 7 6"><rect x="0.5" y="0.3" width="3" height="2.7" fill="#7a828c"/><path d="M2.5 3 h4 l-2 2z" fill="#333"/></svg>
<div class="a" style="left:600px;top:89px;width:16px;height:1px;background:#d8d8d8"></div>
<div class="a" style="left:598px;top:91px;width:19px;height:20px;border:1px solid #c6c6c6;border-radius:3px;background:linear-gradient(#fdfdfd,#f2f2f2)"></div>
<svg class="a" style="left:601px;top:94px" width="13" height="14" viewBox="0 0 13 14"><ellipse cx="7" cy="12.8" rx="5" ry="0.9" fill="#dadada"/><path d="M0.5 2.5 L4.5 0.5 L8.5 2.5 V9 L4.5 11 L0.5 9z" fill="#2e9af0"/><path d="M0.5 2.5 L4.5 4.5 L8.5 2.5 M4.5 4.5 V11 M0.5 5.8 L4.5 7.8 M2.5 1.5 L6.5 3.5 M6.5 1.5 L2.5 3.5 M2.5 3.5 V10" stroke="#d8ecff" stroke-width="0.5" fill="none"/><path d="M4 5.2 L8.5 2.5 L12.5 4.5 V10.3 L8 12.8 L4 10.6z" fill="#6cd21e"/><path d="M4 5.2 L8 7.4 L12.5 4.5 M8 7.4 V12.8 M4 7.9 L8 10.1 L12.5 7.4 M6 6.3 V11.7 M10.2 6 V11.5" stroke="#e4ffd0" stroke-width="0.5" fill="none"/></svg>
<svg class="a" style="left:601px;top:114px" width="13" height="14" viewBox="0 0 13 14"><ellipse cx="6.5" cy="13" rx="5" ry="0.8" fill="#d8d8d8"/><path d="M1.5 12.3 L4.8 3.2 Q9.5 2.5 11.2 8.6 Z" fill="#2a86e0"/><path d="M4.8 3.2 Q9.5 2.5 11.2 8.6 L7.5 6.5z" fill="#1a2848"/><rect x="0" y="5" width="2.2" height="2.2" fill="#f070d0"/><rect x="5.5" y="0.3" width="2" height="2.2" fill="#e868e0"/><path d="M10 0.5 l1 1 l1.3 -0.3 l-0.4 1.3 l0.9 1 l-1.3 0.2 l-0.5 1.2 l-0.6 -1.2 l-1.3 -0.2 l0.9 -1z" fill="#f4d040"/><rect x="11" y="5.5" width="2" height="2" fill="#e84050"/><circle cx="9.8" cy="11" r="1.6" fill="#48b040"/><circle cx="3" cy="2.6" r="1.3" fill="#e89a30"/></svg>
<svg class="a" style="left:601px;top:135px" width="13" height="14" viewBox="0 0 13 14"><ellipse cx="7" cy="13" rx="5" ry="0.8" fill="#d4d4d4"/><path d="M0.5 5 L9.5 1 L12.5 8 L3.5 12 Z" fill="#fafafa" stroke="#b4b8be" stroke-width="0.6"/><path d="M2 5.5 L9 2.4 L11 7.6 L4 10.6 Z" fill="#60b4f0"/><path d="M3.2 8.4 L10.2 5.5 L11 7.6 L4 10.6 Z" fill="#58c038"/><circle cx="5.5" cy="7" r="1.2" fill="#3a9a30"/></svg>
<svg class="a" style="left:601px;top:157px" width="13" height="13" viewBox="0 0 13 13"><circle cx="6.5" cy="6.5" r="5.5" fill="#fafafa" stroke="#eea020" stroke-width="2"/><circle cx="6.5" cy="6.5" r="6.4" fill="none" stroke="#c07a10" stroke-width="0.4"/><path d="M9.6 3 L7.1 7.1 L5.9 5.9z" fill="#e02828"/><path d="M3.4 10 L5.9 5.9 L7.1 7.1z" fill="#2a70e0"/></svg>
<svg class="a" style="left:592px;top:237px" width="4" height="24" viewBox="0 0 4 24"><path d="M0.5 2.5 l1.5 -2 l1.5 2z M0.5 21.5 l1.5 2 l1.5 -2z" fill="#8a8a8a"/><rect x="1.5" y="6" width="1" height="1" fill="#9a9a9a"/><rect x="1.5" y="9" width="1" height="1" fill="#9a9a9a"/><rect x="1.5" y="12" width="1" height="1" fill="#9a9a9a"/><rect x="1.5" y="15" width="1" height="1" fill="#9a9a9a"/><rect x="1.5" y="18" width="1" height="1" fill="#9a9a9a"/></svg>
<div class="a" style="left:0px;top:86px;width:592px;height:16px;background:linear-gradient(#c8c8c8 0,#c8c8c8 1px,#f0f0f0 1px)"></div>
<div class="a" style="left:3px;top:88px;width:11px;height:11px;border:1px solid #cdcdcd;background:#f6f6f6;border-radius:1px"></div>
<div class="a" style="left:6.5px;top:92.5px;width:4.5px;height:4px;border-left:1.4px solid #000;border-bottom:1.4px solid #000"></div>
<div class="a" style="left:59px;top:88px;width:481px;height:11px;background:#fff;border-top:1px solid #e8e8e8;border-bottom:1px solid #e8e8e8"></div>
<div class="a" style="left:59px;top:88px;width:46px;height:11px;background:#ececec;border:1px solid #cfcfcf;border-radius:1px"></div>
<div class="a" style="left:494px;top:88px;width:46px;height:11px;background:#ececec;border:1px solid #cfcfcf;border-radius:1px"></div>
<div class="t rn" style="left:71.6px;top:90.8px;width:20px;text-align:center">1</div>
<div class="t rn" style="left:117.4px;top:90.8px;width:20px;text-align:center">1</div>
<div class="t rn" style="left:140.2px;top:90.8px;width:20px;text-align:center">2</div>
<div class="t rn" style="left:163.1px;top:90.8px;width:20px;text-align:center">3</div>
<div class="t rn" style="left:185.9px;top:90.8px;width:20px;text-align:center">4</div>
<div class="t rn" style="left:208.8px;top:90.8px;width:20px;text-align:center">5</div>
<div class="t rn" style="left:231.7px;top:90.8px;width:20px;text-align:center">6</div>
<div class="t rn" style="left:254.5px;top:90.8px;width:20px;text-align:center">7</div>
<div class="t rn" style="left:277.4px;top:90.8px;width:20px;text-align:center">8</div>
<div class="t rn" style="left:300.2px;top:90.8px;width:20px;text-align:center">9</div>
<div class="t rn" style="left:323.1px;top:90.8px;width:20px;text-align:center">10</div>
<div class="t rn" style="left:346.0px;top:90.8px;width:20px;text-align:center">11</div>
<div class="t rn" style="left:368.8px;top:90.8px;width:20px;text-align:center">12</div>
<div class="t rn" style="left:391.7px;top:90.8px;width:20px;text-align:center">13</div>
<div class="t rn" style="left:414.5px;top:90.8px;width:20px;text-align:center">14</div>
<div class="t rn" style="left:437.4px;top:90.8px;width:20px;text-align:center">15</div>
<div class="t rn" style="left:460.3px;top:90.8px;width:20px;text-align:center">16</div>
<div class="t rn" style="left:483.1px;top:90.8px;width:20px;text-align:center">17</div>
<div class="t rn" style="left:506.0px;top:90.8px;width:20px;text-align:center">18</div>
<svg class="a" style="left:0px;top:0px" width="620" height="110" viewBox="0 0 620 110"><rect x="64" y="94" width="1" height="1" fill="#8a8a8a"/><rect x="70" y="93" width="1" height="2" fill="#3a3a3a"/><rect x="76" y="94" width="1" height="1" fill="#8a8a8a"/><rect x="87" y="94" width="1" height="1" fill="#8a8a8a"/><rect x="93" y="93" width="1" height="2" fill="#3a3a3a"/><rect x="99" y="94" width="1" height="1" fill="#8a8a8a"/><rect x="110" y="94" width="1" height="1" fill="#8a8a8a"/><rect x="116" y="93" width="1" height="2" fill="#3a3a3a"/><rect x="122" y="94" width="1" height="1" fill="#8a8a8a"/><rect x="133" y="94" width="1" height="1" fill="#8a8a8a"/><rect x="139" y="93" width="1" height="2" fill="#3a3a3a"/><rect x="145" y="94" width="1" height="1" fill="#8a8a8a"/><rect x="156" y="94" width="1" height="1" fill="#8a8a8a"/><rect x="162" y="93" width="1" height="2" fill="#3a3a3a"/><rect x="167" y="94" width="1" height="1" fill="#8a8a8a"/><rect x="179" y="94" width="1" height="1" fill="#8a8a8a"/><rect x="185" y="93" width="1" height="2" fill="#3a3a3a"/><rect x="190" y="94" width="1" height="1" fill="#8a8a8a"/><rect x="202" y="94" width="1" height="1" fill="#8a8a8a"/><rect x="207" y="93" width="1" height="2" fill="#3a3a3a"/><rect x="213" y="94" width="1" height="1" fill="#8a8a8a"/><rect x="225" y="94" width="1" height="1" fill="#8a8a8a"/><rect x="230" y="93" width="1" height="2" fill="#3a3a3a"/><rect x="236" y="94" width="1" height="1" fill="#8a8a8a"/><rect x="247" y="94" width="1" height="1" fill="#8a8a8a"/><rect x="253" y="93" width="1" height="2" fill="#3a3a3a"/><rect x="259" y="94" width="1" height="1" fill="#8a8a8a"/><rect x="270" y="94" width="1" height="1" fill="#8a8a8a"/><rect x="276" y="93" width="1" height="2" fill="#3a3a3a"/><rect x="282" y="94" width="1" height="1" fill="#8a8a8a"/><rect x="293" y="94" width="1" height="1" fill="#8a8a8a"/><rect x="299" y="93" width="1" height="2" fill="#3a3a3a"/><rect x="305" y="94" width="1" height="1" fill="#8a8a8a"/><rect x="316" y="94" width="1" height="1" fill="#8a8a8a"/><rect x="322" y="93" width="1" height="2" fill="#3a3a3a"/><rect x="327" y="94" width="1" height="1" fill="#8a8a8a"/><rect x="339" y="94" width="1" height="1" fill="#8a8a8a"/><rect x="345" y="93" width="1" height="2" fill="#3a3a3a"/><rect x="350" y="94" width="1" height="1" fill="#8a8a8a"/><rect x="362" y="94" width="1" height="1" fill="#8a8a8a"/><rect x="367" y="93" width="1" height="2" fill="#3a3a3a"/><rect x="373" y="94" width="1" height="1" fill="#8a8a8a"/><rect x="385" y="94" width="1" height="1" fill="#8a8a8a"/><rect x="390" y="93" width="1" height="2" fill="#3a3a3a"/><rect x="396" y="94" width="1" height="1" fill="#8a8a8a"/><rect x="407" y="94" width="1" height="1" fill="#8a8a8a"/><rect x="413" y="93" width="1" height="2" fill="#3a3a3a"/><rect x="419" y="94" width="1" height="1" fill="#8a8a8a"/><rect x="430" y="94" width="1" height="1" fill="#8a8a8a"/><rect x="436" y="93" width="1" height="2" fill="#3a3a3a"/><rect x="442" y="94" width="1" height="1" fill="#8a8a8a"/><rect x="453" y="94" width="1" height="1" fill="#8a8a8a"/><rect x="459" y="93" width="1" height="2" fill="#3a3a3a"/><rect x="465" y="94" width="1" height="1" fill="#8a8a8a"/><rect x="476" y="94" width="1" height="1" fill="#8a8a8a"/><rect x="482" y="93" width="1" height="2" fill="#3a3a3a"/><rect x="487" y="94" width="1" height="1" fill="#8a8a8a"/><rect x="499" y="94" width="1" height="1" fill="#8a8a8a"/><rect x="505" y="93" width="1" height="2" fill="#3a3a3a"/><rect x="510" y="94" width="1" height="1" fill="#8a8a8a"/><rect x="522" y="94" width="1" height="1" fill="#8a8a8a"/><rect x="527" y="93" width="1" height="2" fill="#3a3a3a"/><rect x="533" y="94" width="1" height="1" fill="#8a8a8a"/><rect x="132" y="98" width="3" height="1" fill="#444"/><rect x="133" y="97" width="1" height="1" fill="#444"/><rect x="161" y="98" width="3" height="1" fill="#444"/><rect x="162" y="97" width="1" height="1" fill="#444"/><rect x="189" y="98" width="3" height="1" fill="#444"/><rect x="190" y="97" width="1" height="1" fill="#444"/><rect x="218" y="98" width="3" height="1" fill="#444"/><rect x="219" y="97" width="1" height="1" fill="#444"/><rect x="246" y="98" width="3" height="1" fill="#444"/><rect x="247" y="97" width="1" height="1" fill="#444"/><rect x="275" y="98" width="3" height="1" fill="#444"/><rect x="276" y="97" width="1" height="1" fill="#444"/><rect x="304" y="98" width="3" height="1" fill="#444"/><rect x="305" y="97" width="1" height="1" fill="#444"/><rect x="332" y="98" width="3" height="1" fill="#444"/><rect x="333" y="97" width="1" height="1" fill="#444"/><rect x="361" y="98" width="3" height="1" fill="#444"/><rect x="362" y="97" width="1" height="1" fill="#444"/><rect x="389" y="98" width="3" height="1" fill="#444"/><rect x="390" y="97" width="1" height="1" fill="#444"/><rect x="418" y="98" width="3" height="1" fill="#444"/><rect x="419" y="97" width="1" height="1" fill="#444"/><rect x="446" y="98" width="3" height="1" fill="#444"/><rect x="447" y="97" width="1" height="1" fill="#444"/><rect x="475" y="98" width="3" height="1" fill="#444"/><rect x="476" y="97" width="1" height="1" fill="#444"/></svg>
<svg class="a" style="left:100.5px;top:88px" width="9" height="12" viewBox="0 0 9 12"><path d="M1 0.8 h6.5 q0.3 2.5 -3.25 5 q-3.55 -2.5 -3.25 -5z M4.25 5.8 q3.55 2.5 3.25 5.2 h-6.5 q-0.3 -2.7 3.25 -5.2z" fill="#f8f8f8" stroke="#707070" stroke-width="1.1"/></svg>
<svg class="a" style="left:490px;top:94px" width="8" height="6" viewBox="0 0 8 6"><path d="M3.5 0.5 l4 5 h-7z" fill="#f4f4f4" stroke="#6a6a6a" stroke-width="0.9"/></svg>
<div class="a" style="left:0px;top:86px;width:2px;height:346px;background:#a8a8a8;border-right:1px solid #dedede"></div>
<div class="a" style="left:2px;top:102px;width:15px;height:320px;background:#f0f0f0"></div>
<div class="a" style="left:3px;top:126px;width:11px;height:283px;background:#fff;border:1px solid #e4e4e4;border-radius:1px"></div>
<div class="a" style="left:3px;top:126px;width:11px;height:46px;background:#ececec;border:1px solid #cacaca;border-radius:1px"></div>
<div class="t vn" style="left:5.4px;top:144.1px;width:10px;height:10px">1</div>
<div class="t vn" style="left:5.4px;top:189.9px;width:10px;height:10px">1</div>
<div class="t vn" style="left:5.4px;top:212.7px;width:10px;height:10px">2</div>
<div class="t vn" style="left:5.4px;top:235.6px;width:10px;height:10px">3</div>
<div class="t vn" style="left:5.4px;top:258.4px;width:10px;height:10px">4</div>
<div class="t vn" style="left:5.4px;top:281.3px;width:10px;height:10px">5</div>
<div class="t vn" style="left:5.4px;top:304.2px;width:10px;height:10px">6</div>
<div class="t vn" style="left:5.4px;top:327.0px;width:10px;height:10px">7</div>
<div class="t vn" style="left:5.4px;top:349.9px;width:10px;height:10px">8</div>
<div class="t vn" style="left:5.4px;top:372.7px;width:10px;height:10px">9</div>
<div class="t vn" style="left:5.4px;top:395.6px;width:10px;height:10px">10</div>
<svg class="a" style="left:0px;top:0px" width="20" height="420" viewBox="0 0 20 420"><rect x="8" y="132" width="1" height="1" fill="#8a8a8a"/><rect x="7.5" y="138" width="2" height="1" fill="#3a3a3a"/><rect x="8" y="143" width="1" height="1" fill="#8a8a8a"/><rect x="8" y="155" width="1" height="1" fill="#8a8a8a"/><rect x="7.5" y="161" width="2" height="1" fill="#3a3a3a"/><rect x="8" y="166" width="1" height="1" fill="#8a8a8a"/><rect x="8" y="178" width="1" height="1" fill="#8a8a8a"/><rect x="7.5" y="183" width="2" height="1" fill="#3a3a3a"/><rect x="8" y="189" width="1" height="1" fill="#8a8a8a"/><rect x="8" y="201" width="1" height="1" fill="#8a8a8a"/><rect x="7.5" y="206" width="2" height="1" fill="#3a3a3a"/><rect x="8" y="212" width="1" height="1" fill="#8a8a8a"/><rect x="8" y="223" width="1" height="1" fill="#8a8a8a"/><rect x="7.5" y="229" width="2" height="1" fill="#3a3a3a"/><rect x="8" y="235" width="1" height="1" fill="#8a8a8a"/><rect x="8" y="246" width="1" height="1" fill="#8a8a8a"/><rect x="7.5" y="252" width="2" height="1" fill="#3a3a3a"/><rect x="8" y="258" width="1" height="1" fill="#8a8a8a"/><rect x="8" y="269" width="1" height="1" fill="#8a8a8a"/><rect x="7.5" y="275" width="2" height="1" fill="#3a3a3a"/><rect x="8" y="281" width="1" height="1" fill="#8a8a8a"/><rect x="8" y="292" width="1" height="1" fill="#8a8a8a"/><rect x="7.5" y="298" width="2" height="1" fill="#3a3a3a"/><rect x="8" y="303" width="1" height="1" fill="#8a8a8a"/><rect x="8" y="315" width="1" height="1" fill="#8a8a8a"/><rect x="7.5" y="321" width="2" height="1" fill="#3a3a3a"/><rect x="8" y="326" width="1" height="1" fill="#8a8a8a"/><rect x="8" y="338" width="1" height="1" fill="#8a8a8a"/><rect x="7.5" y="343" width="2" height="1" fill="#3a3a3a"/><rect x="8" y="349" width="1" height="1" fill="#8a8a8a"/><rect x="8" y="361" width="1" height="1" fill="#8a8a8a"/><rect x="7.5" y="366" width="2" height="1" fill="#3a3a3a"/><rect x="8" y="372" width="1" height="1" fill="#8a8a8a"/><rect x="8" y="383" width="1" height="1" fill="#8a8a8a"/><rect x="7.5" y="389" width="2" height="1" fill="#3a3a3a"/><rect x="8" y="395" width="1" height="1" fill="#8a8a8a"/></svg>
<div class="a" style="left:17px;top:102px;width:565px;height:320px;background:#ababab;border-top:1px solid #404040;border-left:1px solid #4a4a4a"></div>
<div class="a" style="left:59px;top:125px;width:481px;height:297px;background:#fff;border-top:1px solid #404040;border-left:1px solid #5a5a5a"></div>
<div class="a" style="left:540px;top:127px;width:2px;height:295px;background:#000"></div>
<div class="a" style="left:105px;top:172px;width:389px;height:250px;border:1px solid #c8c8c8;border-bottom:none"></div>
<div class="a" style="left:581px;top:86px;width:11px;height:336px;background:linear-gradient(90deg,#e8e8e8,#f4f4f4 40%,#f0f0f0)"></div>
<svg class="a" style="left:584.5px;top:91px" width="5" height="3" viewBox="0 0 5 3"><path d="M0 2.5 l2.5 -2.5 l2.5 2.5z" fill="#4a4a4a"/></svg>
<div class="a" style="left:582px;top:97px;width:9px;height:123px;background:linear-gradient(90deg,#fafafa,#ececec 50%,#d8d8d8);border:1px solid #b6b6b6;border-radius:2px"></div>
<svg class="a" style="left:584px;top:157px" width="6" height="4" viewBox="0 0 6 4"><path d="M0 0.5 h5 M0 2 h5 M0 3.5 h5" stroke="#7a7a7a" stroke-width="0.7"/></svg>
<svg class="a" style="left:584.5px;top:385px" width="5" height="3" viewBox="0 0 5 3"><path d="M0 0 l2.5 2.5 l2.5 -2.5z" fill="#4a4a4a"/></svg>
<div class="a" style="left:582px;top:392px;width:9px;height:9px;border:1px solid #a8a8a8;border-radius:1px;background:linear-gradient(#fefefe,#e6e6e6)"></div>
<div class="a" style="left:582px;top:402px;width:9px;height:9px;border:1px solid #a8a8a8;border-radius:1px;background:linear-gradient(#fefefe,#e6e6e6)"></div>
<div class="a" style="left:582px;top:412px;width:9px;height:9px;border:1px solid #a8a8a8;border-radius:1px;background:linear-gradient(#fefefe,#e6e6e6)"></div>
<svg class="a" style="left:583.5px;top:393px" width="6" height="7" viewBox="0 0 6 7"><path d="M0 3 L3 0 L6 3z M0 6.5 L3 3.5 L6 6.5z" fill="#111"/></svg>
<svg class="a" style="left:583.5px;top:403.5px" width="7" height="7" viewBox="0 0 7 7"><circle cx="3" cy="3" r="2.4" fill="#4a78b8" stroke="#3a5a8a" stroke-width="0.6"/><circle cx="2.6" cy="2.5" r="1" fill="#9ab8e0"/></svg>
<svg class="a" style="left:583.5px;top:413.5px" width="6" height="7" viewBox="0 0 6 7"><path d="M0 0 L3 3 L6 0z M0 3.5 L3 6.5 L6 3.5z" fill="#111"/></svg>
<div class="a" style="left:2px;top:422px;width:590px;height:10px;background:linear-gradient(#e8e8e8,#f4f4f4 40%,#f0f0f0)"></div>
<svg class="a" style="left:5px;top:425px" width="3" height="5" viewBox="0 0 3 5"><path d="M2.5 0.3 l-2.2 2.2 l2.2 2.2z" fill="#4a4a4a"/></svg>
<div class="a" style="left:11px;top:422.3px;width:560px;height:9.4px;background:linear-gradient(#fafafa,#ececec 50%,#d4d4d4);border:1px solid #b6b6b6;border-radius:2px"></div>
<svg class="a" style="left:288px;top:424px" width="5" height="5" viewBox="0 0 5 5"><path d="M0.5 0 v5 M2 0 v5 M3.5 0 v5" stroke="#6a6a6a" stroke-width="0.7"/></svg>
<svg class="a" style="left:575px;top:425px" width="3" height="5" viewBox="0 0 3 5"><path d="M0.3 0.3 l2.2 2.2 l-2.2 2.2z" fill="#4a4a4a"/></svg>
<div class="a" style="left:0px;top:432px;width:620px;height:13px;background:linear-gradient(#f6f6f6,#eeeeee);border-top:1px solid #d8d8d8"></div>
<div class="st" style="left:6px;top:437.6px;">Page 1 / 1</div>
<div class="st" style="left:90px;top:437.6px;">Default</div>
<div class="st" style="left:188px;top:437.6px;">English (UK)</div>
<div class="st" style="left:256px;top:437.6px;">INSRT</div>
<div class="st" style="left:283px;top:437.6px;">STD</div>
<div class="st" style="left:595px;top:437.6px;">100 %</div>
<div class="ssep" style="left:86px;top:433px"></div>
<div class="ssep" style="left:162px;top:433px"></div>
<div class="ssep" style="left:255px;top:433px"></div>
<div class="ssep" style="left:281px;top:433px"></div>
<div class="ssep" style="left:301px;top:433px"></div>
<div class="ssep" style="left:311px;top:433px"></div>
<div class="ssep" style="left:329px;top:433px"></div>
<div class="ssep" style="left:460px;top:433px"></div>
<div class="ssep" style="left:505px;top:433px"></div>
<div class="ssep" style="left:592px;top:433px"></div>
<svg class="a" style="left:464px;top:436px" width="40" height="8" viewBox="0 0 40 8"><path d="M0.5 0.5 h3.5 l1.5 1.5 v5 h-5z" fill="#fff" stroke="#8a96a6" stroke-width="0.8"/><path d="M10.5 0.5 h6 v6.5 h-6z M16.5 0.5 h6 v6.5 h-6z" fill="#a8c8ec" stroke="#3a6aa8" stroke-width="0.8"/><path d="M12 2 h3 M12 3.5 h3 M18 2 h3 M18 3.5 h3" stroke="#fff" stroke-width="0.6"/><path d="M26.5 1 h5.5 v6 h-5.5z M32 1 h5.5 v6 h-5.5z" fill="#f4f4f4" stroke="#8a96a6" stroke-width="0.8"/></svg>
<svg class="a" style="left:509px;top:435px" width="80" height="9" viewBox="0 0 80 9"><circle cx="3.8" cy="4.5" r="3.2" fill="#e8eef8" stroke="#5a78b0" stroke-width="0.8"/><rect x="2" y="4" width="3.6" height="1" fill="#3a5a98"/><rect x="10" y="4.3" width="59" height="0.7" fill="#a0a4aa"/><rect x="17" y="2.5" width="0.7" height="4" fill="#a0a4aa"/><circle cx="39.5" cy="4.6" r="2.4" fill="#6a8cc0" stroke="#3a5a88" stroke-width="0.7"/><circle cx="75.5" cy="4.5" r="3.2" fill="#e8eef8" stroke="#5a78b0" stroke-width="0.8"/><rect x="73.7" y="4" width="3.6" height="1" fill="#3a5a98"/><rect x="75" y="2.7" width="1" height="3.6" fill="#3a5a98"/></svg>
</body></html>
